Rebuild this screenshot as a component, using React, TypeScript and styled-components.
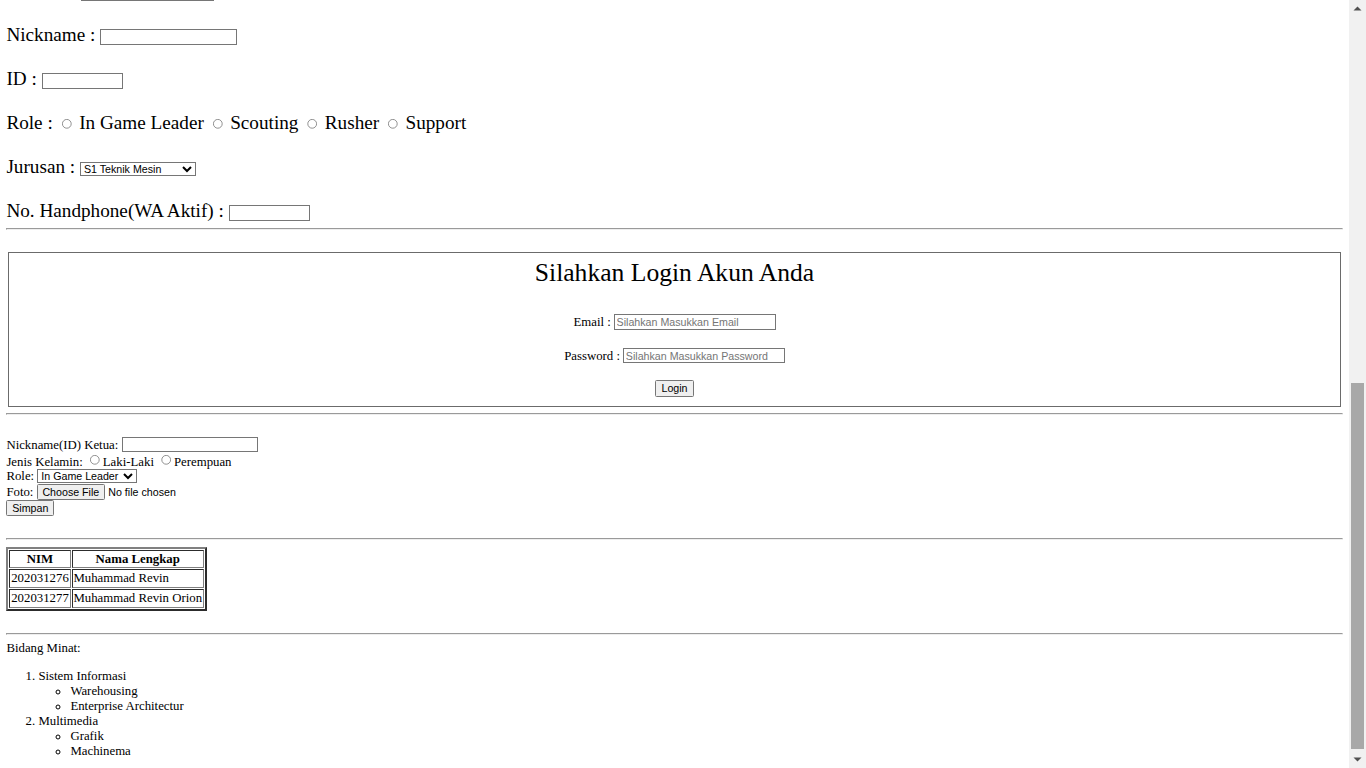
import React from "react";
import styled, { createGlobalStyle } from "styled-components";

const GlobalStyle = createGlobalStyle`
  html, body {
    margin: 0;
    height: 100%;
    overflow: hidden;
    background: #fff;
  }
  #root {
    height: 100%;
  }
`;

const Viewport = styled.div`
  display: flex;
  height: 100vh;
`;

// page scrolled to the very bottom: content sticks to the bottom edge
const Page = styled.div`
  flex: 1;
  min-width: 0;
  display: flex;
  flex-direction: column;
  justify-content: flex-end;
  overflow: hidden;
`;

// the screenshot was taken at 80% browser zoom
const Document = styled.div`
  flex-shrink: 0;
  zoom: 0.8;
  padding: 8px 8px 0;
  font-family: "Liberation Serif", "Times New Roman", serif;
  font-size: 16px;
  line-height: normal;
  color: #000;
`;

const Registration = styled.div`
  font-size: 24px;
`;

const Row = styled.div`
  &:not(:last-child) {
    margin-bottom: 1.15em;
  }
`;

const TextField = styled.input<{ $width: number }>`
  box-sizing: border-box;
  width: ${({ $width }) => $width}px;
  font: 13.333px "Liberation Sans", Arial, sans-serif;
  vertical-align: baseline;
`;

const Radio = styled.input`
  margin: 3px 3px 0 5px;
`;

const Dropdown = styled.select<{ $width: number }>`
  width: ${({ $width }) => $width}px;
  font: 13.333px "Liberation Sans", Arial, sans-serif;
`;

const Button = styled.button<{ $wide?: boolean }>`
  font: 13.333px "Liberation Sans", Arial, sans-serif;
  padding: ${({ $wide }) => ($wide ? "2px 7px" : "1px 6px")};
`;

const FileField = styled.input`
  font: 13.333px "Liberation Sans", Arial, sans-serif;
`;

const Rule = styled.hr<{ $top?: number }>`
  margin: ${({ $top }) => $top ?? 8}px 0 8px;
`;

const LoginBox = styled.div`
  margin: 28px 2px 0;
  border: 1px solid #6b6b6b;
  padding: 6px 12px 12px;
  text-align: center;
`;

const LoginTitle = styled.div`
  font-size: 32px;
`;

const LoginRow = styled.div<{ $gap: number }>`
  margin-top: ${({ $gap }) => $gap}px;
`;

const MemberForm = styled.form`
  margin: 28px 0;
`;

const NimTable = styled.table`
  border: 3px outset gray;
  border-spacing: 2px;
  margin-bottom: 28px;
  font-size: 16px;

  th,
  td {
    border: 1px inset gray;
    padding: 1px;
  }
`;

const InterestList = styled.ol`
  margin: 16px 0 11px;
  padding-left: 40px;
`;

const SubList = styled.ul`
  margin: 0;
  padding-left: 40px;
  list-style-type: circle;
`;

const Scrollbar = styled.div`
  width: 17px;
  flex-shrink: 0;
  display: flex;
  flex-direction: column;
  background: #f1f1f1;
`;

const ArrowButton = styled.div`
  height: 17px;
  display: flex;
  align-items: center;
  justify-content: center;
`;

const Track = styled.div`
  flex: 1;
  display: flex;
  flex-direction: column;
  justify-content: flex-end;
  padding: 0 2px 2px;
`;

const Thumb = styled.div`
  height: 366px;
  background: #a8a8a8;
`;

const Arrow = ({ down }: { down?: boolean }) => (
  <svg width="9" height="5" viewBox="0 0 9 5">
    <polygon
      points={down ? "0.5,0.5 8.5,0.5 4.5,4.5" : "0.5,4.5 4.5,0.5 8.5,4.5"}
      fill="#505050"
    />
  </svg>
);

const roles = ["In Game Leader", "Scouting", "Rusher", "Support"];

export default function App() {
  return (
    <>
      <GlobalStyle />
      <Viewport>
        <Page>
          <Document>
            <Registration>
              <Row>
                Instansi : <TextField type="text" $width={166} />
              </Row>
              <Row>
                Nickname : <TextField type="text" $width={171} />
              </Row>
              <Row>
                ID : <TextField type="text" $width={102} />
              </Row>
              <Row>
                Role :
                {roles.map((role) => (
                  <React.Fragment key={role}>
                    {" "}
                    <Radio type="radio" name="role" value={role} /> {role}
                  </React.Fragment>
                ))}
              </Row>
              <Row>
                Jurusan :{" "}
                <Dropdown $width={145} defaultValue="S1 Teknik Mesin">
                  <option>S1 Teknik Mesin</option>
                  <option>S1 Teknik Informatika</option>
                  <option>S1 Sistem Informasi</option>
                </Dropdown>
              </Row>
              <Row>
                No. Handphone(WA Aktif) : <TextField type="text" $width={102} />
              </Row>
            </Registration>

            <Rule $top={7} />

            <LoginBox>
              <LoginTitle>Silahkan Login Akun Anda</LoginTitle>
              <LoginRow $gap={33}>
                Email :{" "}
                <TextField type="email" $width={202} placeholder="Silahkan Masukkan Email" />
              </LoginRow>
              <LoginRow $gap={22}>
                Password :{" "}
                <TextField type="password" $width={202} placeholder="Silahkan Masukkan Password" />
              </LoginRow>
              <LoginRow $gap={20}>
                <Button type="button" $wide>
                  Login
                </Button>
              </LoginRow>
            </LoginBox>

            <Rule $top={6.5} />

            <MemberForm onSubmit={(e) => e.preventDefault()}>
              Nickname(ID) Ketua: <TextField type="text" $width={170} />
              <br />
              Jenis Kelamin: <Radio type="radio" name="gender" />
              Laki-Laki <Radio type="radio" name="gender" />
              Perempuan
              <br />
              Role:{" "}
              <Dropdown $width={125} defaultValue="In Game Leader">
                {roles.map((role) => (
                  <option key={role}>{role}</option>
                ))}
              </Dropdown>
              <br />
              Foto: <FileField type="file" />
              <br />
              <Button type="submit">Simpan</Button>
            </MemberForm>

            <Rule />

            <NimTable>
              <thead>
                <tr>
                  <th>NIM</th>
                  <th>Nama Lengkap</th>
                </tr>
              </thead>
              <tbody>
                <tr>
                  <td>202031276</td>
                  <td>Muhammad Revin</td>
                </tr>
                <tr>
                  <td>202031277</td>
                  <td>Muhammad Revin Orion</td>
                </tr>
              </tbody>
            </NimTable>

            <Rule />

            Bidang Minat:
            <InterestList>
              <li>
                Sistem Informasi
                <SubList>
                  <li>Warehousing</li>
                  <li>Enterprise Architectur</li>
                </SubList>
              </li>
              <li>
                Multimedia
                <SubList>
                  <li>Grafik</li>
                  <li>Machinema</li>
                </SubList>
              </li>
            </InterestList>
          </Document>
        </Page>
        <Scrollbar>
          <ArrowButton>
            <Arrow />
          </ArrowButton>
          <Track>
            <Thumb />
          </Track>
          <ArrowButton>
            <Arrow down />
          </ArrowButton>
        </Scrollbar>
      </Viewport>
    </>
  );
}
